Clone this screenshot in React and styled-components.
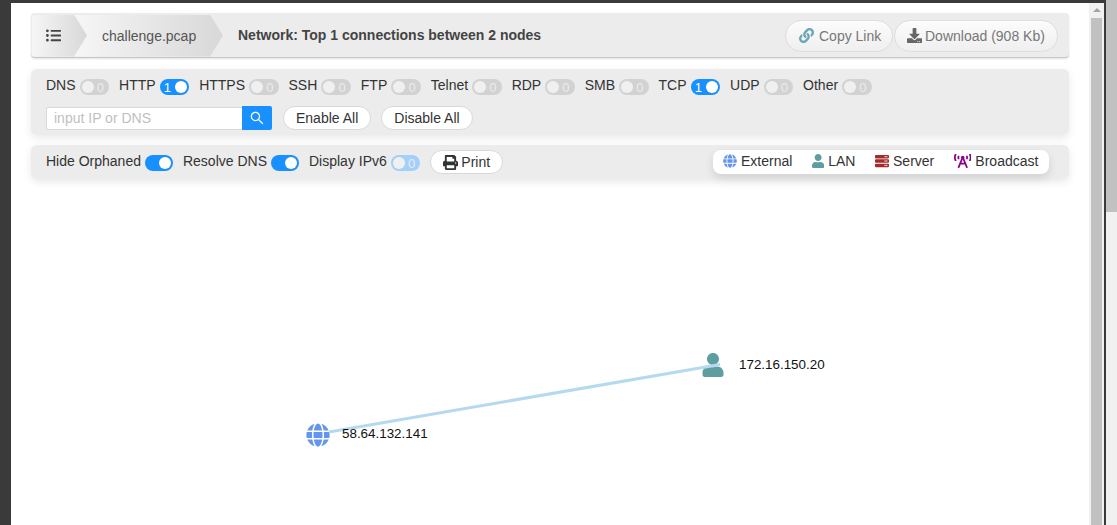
import React from 'react';
import styled, { createGlobalStyle } from 'styled-components';
import { FaListUl, FaLink, FaDownload, FaPrint, FaGlobe, FaUser, FaServer, FaBroadcastTower } from 'react-icons/fa';
import { AiOutlineSearch } from 'react-icons/ai';

const protocols = [
  { name: 'DNS', count: 0 },
  { name: 'HTTP', count: 1 },
  { name: 'HTTPS', count: 0 },
  { name: 'SSH', count: 0 },
  { name: 'FTP', count: 0 },
  { name: 'Telnet', count: 0 },
  { name: 'RDP', count: 0 },
  { name: 'SMB', count: 0 },
  { name: 'TCP', count: 1 },
  { name: 'UDP', count: 0 },
  { name: 'Other', count: 0 }
];

const legend = [
  { name: 'External', Icon: FaGlobe, color: '#6495ed', width: 14 },
  { name: 'LAN', Icon: FaUser, color: '#5f9ea0', width: 12.25 },
  { name: 'Server', Icon: FaServer, color: '#a52a2a', width: 14 },
  { name: 'Broadcast', Icon: FaBroadcastTower, color: '#8b008b', width: 17.5 }
];

const nodes = [
  { ip: '58.64.132.141', Icon: FaGlobe, color: '#6495ed', x: 287, y: 245, gap: 12, lift: 1 },
  { ip: '172.16.150.20', Icon: FaUser, color: '#5f9ea0', x: 682, y: 175, gap: 14, lift: 0 }
];

const Global = createGlobalStyle`
  html, body {
    margin: 0;
    height: 100%;
    overflow: hidden;
    background: #3a3a3a;
  }
  body {
    font-family: "Liberation Sans", Arial, sans-serif;
    font-size: 14px;
    color: #333;
  }
`;

const Shell = styled.div`
  display: flex;
  height: 525px;
`;

const Main = styled.div`
  flex: 1;
  display: flex;
  padding: 3px 2px 0 11px;
  min-width: 0;
`;

const Page = styled.div`
  flex: 1;
  background: #fff;
  padding: 10px 20px 0;
  display: flex;
  flex-direction: column;
  min-width: 0;
`;

const Track = styled.div`
  width: 15px;
  background: #f1f1f1;
  display: flex;
  flex-direction: column;
  align-items: center;
  flex-shrink: 0;
`;

const Arrow = styled.div`
  margin-top: 5px;
  width: 0;
  height: 0;
  border-left: 4px solid transparent;
  border-right: 4px solid transparent;
  border-bottom: 4px solid #a3a3a3;
`;

const InnerThumb = styled.div`
  margin-top: 6px;
  width: 11px;
  flex: 1;
  background: #c1c1c1;
`;

const OuterTrack = styled.div`
  width: 11px;
  background: #f1f1f1;
  flex-shrink: 0;
`;

const OuterThumb = styled.div`
  height: 212px;
  background: #c1c1c1;
`;

const Panel = styled.div`
  background: #ececec;
  border-radius: 6px;
  box-shadow: 0 3px 8px rgba(0, 0, 0, 0.09);
`;

const Header = styled(Panel)`
  height: 45px;
  box-sizing: border-box;
  border-radius: 4px;
  border-bottom: 1px solid #c8c8c8;
  box-shadow: 0 1px 2px rgba(0, 0, 0, 0.12);
  padding: 1px 11px 0 1px;
  margin-bottom: 11px;
  display: flex;
  align-items: center;
`;

const Crumb = styled.div`
  height: 42px;
  display: flex;
  align-items: center;
  box-sizing: border-box;
  background: linear-gradient(90deg, #f6f6f6, #d8d8d8);
  clip-path: polygon(0 0, calc(100% - 13px) 0, 100% 50%, calc(100% - 13px) 100%, 0 100%);
  color: #555;
`;

const MenuCrumb = styled(Crumb)`
  width: 55px;
  padding-left: 14px;
  position: relative;
  z-index: 1;
  font-size: 15px;
  color: #444;
  border-radius: 3px 0 0 3px;
`;

const FileCrumb = styled(Crumb)`
  width: 149px;
  margin-left: -13px;
  padding-left: 28px;
`;

const Title = styled.div`
  margin: 0 0 2px 15px;
  font-weight: 700;
  color: #444;
  flex: 1;
`;

const Pill = styled.div`
  display: flex;
  align-items: center;
  gap: ${p => p.$iconGap}px;
  width: ${p => p.$width}px;
  height: 32px;
  box-sizing: border-box;
  padding-left: ${p => p.$left}px;
  margin-left: ${p => p.$gap}px;
  border: 1px solid #dedede;
  border-radius: 16px;
  background: linear-gradient(180deg, #fcfcfc, #efefef);
  color: #777;
  svg {
    font-size: 15px;
    color: ${p => p.$iconColor};
  }
`;

const ProtocolPanel = styled(Panel)`
  height: 66px;
  box-sizing: border-box;
  padding: 6px 15px 0;
  margin-bottom: 10px;
`;

const Row = styled.div`
  display: flex;
  align-items: center;
`;

const SearchRow = styled(Row)`
  margin-top: 11px;
`;

const ProtocolItem = styled.div`
  display: flex;
  align-items: center;
  gap: 4px;
  margin-right: 10px;
`;

const OptionItem = styled(ProtocolItem)`
  margin-bottom: 2px;
`;

const Switch = styled.div`
  width: ${p => p.$width}px;
  height: 16px;
  box-sizing: border-box;
  border-radius: 8px;
  padding: 2px;
  display: flex;
  align-items: center;
  justify-content: ${p => (p.$on ? 'flex-end' : 'flex-start')};
  background: ${p => p.$bg};
  font-size: 13px;
  line-height: 1;
  color: ${p => (p.$on ? '#fff' : '#ececec')};
  margin-top: 4px;
  flex-shrink: 0;
`;

const Count = styled.span`
  flex: 1;
  text-align: center;
  padding-right: ${p => (p.$on ? 2 : 0)}px;
  order: ${p => (p.$on ? 0 : 1)};
`;

const Knob = styled.span`
  width: 12px;
  height: 12px;
  border-radius: 50%;
  background: ${p => (p.$on ? '#fff' : '#f0f0f0')};
  order: ${p => (p.$on ? 1 : 0)};
`;

const SearchInput = styled.input`
  width: 196px;
  height: 23px;
  box-sizing: border-box;
  border: 1px solid #d9d9d9;
  border-right: 0;
  border-radius: 2px 0 0 2px;
  padding: 0 7px;
  font: 14px "Liberation Sans", Arial, sans-serif;
  outline: none;
  &::placeholder {
    color: #bfbfbf;
  }
`;

const SearchButton = styled.div`
  width: 30px;
  height: 24px;
  background: #1890ff;
  color: #fff;
  font-size: 16px;
  display: flex;
  align-items: center;
  justify-content: center;
  border-radius: 0 2px 2px 0;
`;

const RoundButton = styled.div`
  height: 24px;
  box-sizing: border-box;
  padding: 0 12px;
  border: 1px solid #d9d9d9;
  border-radius: 12px;
  background: #fff;
  display: flex;
  align-items: center;
  gap: 3px;
  margin-left: ${p => p.$left}px;
  svg {
    font-size: 15px;
  }
`;

const OptionsPanel = styled(Panel)`
  height: 34px;
  box-sizing: border-box;
  padding: 0 20px 0 15px;
  display: flex;
  align-items: center;
`;

const Legend = styled.div`
  margin-left: auto;
  height: 24px;
  width: 336px;
  box-sizing: border-box;
  padding: 0 10px 2px;
  background: #fff;
  border-radius: 8px;
  box-shadow: 0 4px 10px rgba(0, 0, 0, 0.12);
  display: flex;
  align-items: center;
  gap: 19.6px;
`;

const LegendItem = styled.div`
  display: flex;
  align-items: center;
  gap: 4px;
  svg {
    height: 14px;
    width: ${p => p.$iconWidth}px;
    color: ${p => p.$color};
  }
`;

const Canvas = styled.div`
  position: relative;
  flex: 1;
  margin-top: 11px;
`;

const Edges = styled.svg`
  position: absolute;
  inset: 0;
  z-index: 1;
  width: 100%;
  height: 100%;
`;

const Node = styled.div`
  position: absolute;
  left: ${p => p.$x - 12}px;
  top: ${p => p.$y - 12}px;
  display: flex;
  align-items: center;
  gap: ${p => p.$gap}px;
  svg {
    width: 24px;
    height: 24px;
    color: ${p => p.$color};
  }
`;

const NodeLabel = styled.span`
  position: relative;
  z-index: 2;
  top: ${p => -p.$lift}px;
  font-size: 13.4px;
  line-height: 24px;
  color: #111;
`;

const Toggle = ({ on, count, width = 29.5, bg }) => (
  <Switch $on={on} $width={width} $bg={bg || (on ? '#1890ff' : '#d2d2d2')}>
    {count !== undefined && <Count $on={on}>{count}</Count>}
    <Knob $on={on} />
  </Switch>
);

const App = () => (
  <>
    <Global />
    <Shell>
      <Main>
        <Page>
          <Header>
            <MenuCrumb><FaListUl /></MenuCrumb>
            <FileCrumb>challenge.pcap</FileCrumb>
            <Title>Network: Top 1 connections between 2 nodes</Title>
            <Pill $iconColor="#6aa5b8" $width={108} $left={13} $gap={0} $iconGap={5}><FaLink />Copy Link</Pill>
            <Pill $iconColor="#666" $width={164} $left={12} $gap={1} $iconGap={3}><FaDownload />Download (908 Kb)</Pill>
          </Header>

          <ProtocolPanel>
            <Row>
              {protocols.map(p => (
                <ProtocolItem key={p.name}>
                  {p.name}
                  <Toggle on={p.count > 0} count={p.count} />
                </ProtocolItem>
              ))}
            </Row>
            <SearchRow>
              <SearchInput placeholder="input IP or DNS" />
              <SearchButton><AiOutlineSearch /></SearchButton>
              <RoundButton $left={11}>Enable All</RoundButton>
              <RoundButton $left={10}>Disable All</RoundButton>
            </SearchRow>
          </ProtocolPanel>

          <OptionsPanel>
            <OptionItem>Hide Orphaned<Toggle on width={28} /></OptionItem>
            <OptionItem>Resolve DNS<Toggle on width={28} /></OptionItem>
            <OptionItem>Display IPv6<Toggle on={false} count={0} bg="#a3d0fb" /></OptionItem>
            <RoundButton $left={0}><FaPrint />Print</RoundButton>
            <Legend>
              {legend.map(({ name, Icon, color, width }) => (
                <LegendItem key={name} $color={color} $iconWidth={width}><Icon />{name}</LegendItem>
              ))}
            </Legend>
          </OptionsPanel>

          <Canvas>
            {nodes.map(({ ip, Icon, color, x, y, gap, lift }) => (
              <Node key={ip} $x={x} $y={y} $color={color} $gap={gap}>
                <Icon />
                <NodeLabel $lift={lift}>{ip}</NodeLabel>
              </Node>
            ))}
            <Edges>
              <line x1={298} y1={242} x2={689} y2={174.6} stroke="#b5daf0" strokeWidth="3" />
            </Edges>
          </Canvas>
        </Page>
        <Track>
          <Arrow />
          <InnerThumb />
        </Track>
      </Main>
      <OuterTrack>
        <OuterThumb />
      </OuterTrack>
    </Shell>
  </>
);

export default App;
